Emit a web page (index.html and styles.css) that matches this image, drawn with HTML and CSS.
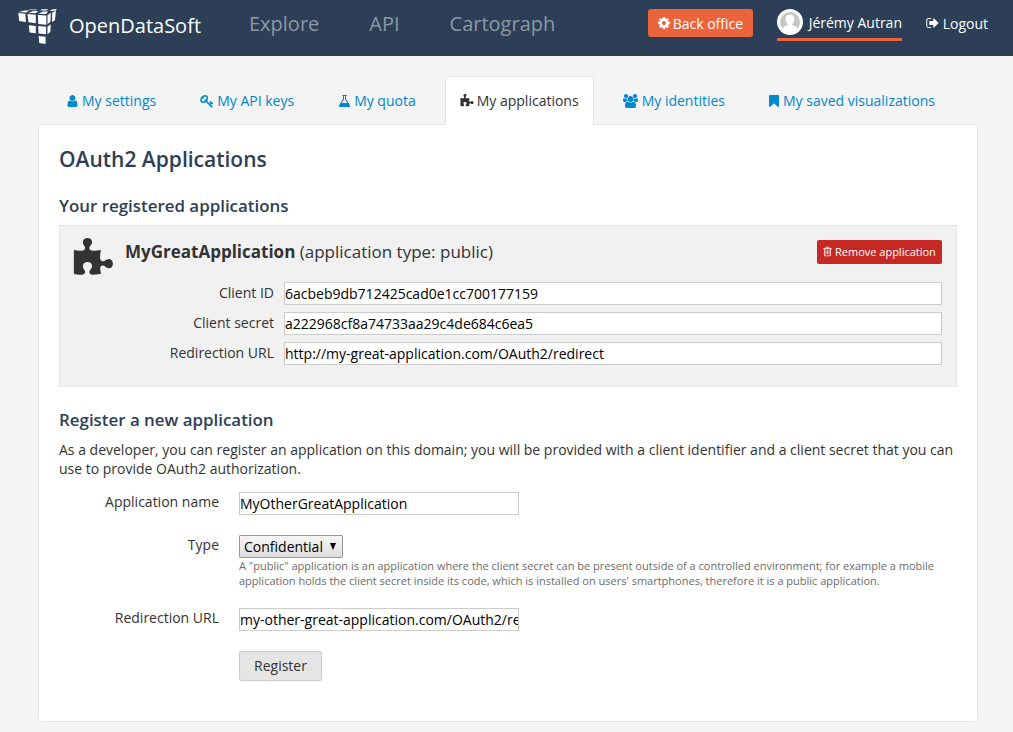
FILE: index.html
```html
<!DOCTYPE html>
<html lang="en">
<head>
<meta charset="utf-8">
<title>OAuth2 Applications</title>
<link rel="stylesheet" href="styles.css">
</head>
<body>
<svg class="defs" aria-hidden="true">
  <symbol id="cog" viewBox="128 0 1536 1792"><path d="M1152 896q0-106-75-181t-181-75-181 75-75 181 75 181 181 75 181-75 75-181zm512-109v222q0 12-8 23t-20 13l-185 28q-19 54-39 91 35 50 107 138 10 12 10 25t-9 23q-27 37-99 108t-94 71q-12 0-26-9l-138-108q-44 23-91 38-16 136-29 186-7 28-36 28h-222q-14 0-24.5-8.5t-11.5-21.5l-28-184q-49-16-90-37l-141 107q-10 9-25 9-14 0-25-11-126-114-165-168-7-10-7-23 0-12 8-23 15-21 51-66.5t54-70.5q-27-50-41-99l-183-27q-13-2-21-12.5t-8-23.5v-222q0-12 8-23t19-13l186-28q14-46 39-92-40-57-107-138-10-12-10-24 0-10 9-23 26-36 98.5-107.5t94.5-71.5q13 0 26 10l138 107q44-23 91-38 16-136 29-186 7-28 36-28h222q14 0 24.5 8.5t11.5 21.5l28 184q49 16 90 37l142-107q9-9 24-9 13 0 25 10 129 119 165 170 7 8 7 22 0 12-8 23-15 21-51 66.5t-54 70.5q26 50 41 98l183 28q13 2 21 12.5t8 23.5z"/></symbol>
  <symbol id="signout" viewBox="64 0 1600 1792"><path d="M704 1440q0 4 1 20t.5 26.5-3 23.5-10 19.5-20.5 6.5h-320q-119 0-203.5-84.5t-84.5-203.5v-704q0-119 84.5-203.5t203.5-84.5h320q13 0 22.5 9.5t9.5 22.5q0 4 1 20t.5 26.5-3 23.5-10 19.5-20.5 6.5h-320q-66 0-113 47t-47 113v704q0 66 47 113t113 47h312l11.5 1 11.5 3 8 5.5 7 9 2 13.5zm928-544q0 26-19 45l-544 544q-19 19-45 19t-45-19-19-45v-288h-448q-26 0-45-19t-19-45v-384q0-26 19-45t45-19h448v-288q0-26 19-45t45-19 45 19l544 544q19 19 19 45z"/></symbol>
  <symbol id="user" viewBox="256 0 1280 1792"><path d="M1536 1399q0 109-62.5 187t-150.5 78h-854q-88 0-150.5-78t-62.5-187q0-85 8.5-160.5t31.5-152 58.5-131 94-89 134.5-34.5q131 128 313 128t313-128q76 0 134.5 34.5t94 89 58.5 131 31.5 152 8.5 160.5zm-256-887q0 159-112.5 271.5t-271.5 112.5-271.5-112.5-112.5-271.5 112.5-271.5 271.5-112.5 271.5 112.5 112.5 271.5z"/></symbol>
  <symbol id="key" viewBox="40 0 1680 1792"><path d="M832 512q0-80-56-136t-136-56-136 56-56 136q0 42 19 83-41-19-83-19-80 0-136 56t-56 136 56 136 136 56 136-56 56-136q0-42-19-83 41 19 83 19 80 0 136-56t56-136zm851 704q0 17-49 66t-66 49q-9 0-28.5-16t-36.5-33-38.5-40-24.5-26l-96 96 220 220q28 28 28 68 0 42-39 81t-81 39q-40 0-68-28l-671-671q-176 131-365 131-163 0-265.5-102.5t-102.5-265.5q0-160 95-313t248-248 313-95q163 0 265.5 102.5t102.5 265.5q0 189-131 365l355 355 96-96q-3-3-26-24.5t-40-38.5-33-36.5-16-28.5q0-17 49-66t66-49q13 0 23 10 6 6 46 44.5t82 79.5 86.5 86 73 78 28.5 41z"/></symbol>
  <symbol id="flask" viewBox="64 0 1664 1792"><path d="M1591 1448q56 89 21.5 152.5t-140.5 63.5h-1152q-106 0-140.5-63.5t21.5-152.5l503-793v-399h-64q-26 0-45-19t-19-45 19-45 45-19h512q26 0 45 19t19 45-19 45-45 19h-64v399zm-779-725l-272 429h712l-272-429-20-31v-436h-128v436z"/></symbol>
  <symbol id="puzzle" viewBox="64 0 1728 1792"><path d="M1755 1099q0 81-44.5 135t-123.5 54q-41 0-77.5-17.5t-59-38-56.5-38-71-17.5q-110 0-110 124 0 39 16 115t15 115v5q-22 0-33 1-34 3-97.5 11.5t-115.5 13.5-98 5q-61 0-103-26.5t-42-83.5q0-37 17.5-71t38-56.5 38-59 17.5-77.5q0-79-54-123.5t-135-44.5q-84 0-143 45.5t-59 127.5q0 43 15 83t33.5 64.5 33.5 53 15 50.5q0 45-46 89-37 35-117 35-95 0-245-24-9-2-27.5-4t-27.5-4l-13-2q-1 0-3-1-2 0-2-1v-1024q2 1 17.5 3.5t34 5 21.5 3.5q150 24 245 24 80 0 117-35 46-44 46-89 0-22-15-50.5t-33.5-53-33.5-64.5-15-83q0-82 59-127.5t144-45.5q80 0 134 44.5t54 123.5q0 41-17.5 77.5t-38 59-38 56.5-17.5 71q0 57 42 83.5t103 26.5q64 0 180-15t163-17v2q-1 2-3.500 17.5t-5 34-3.500 21.5q-24 150-24 245 0 80 35 117 44 46 89 46 22 0 50.5-15t53-33.500 64.5-33.500 83-15q82 0 127.500 59t45.500 143z"/></symbol>
  <symbol id="users" viewBox="64 0 1920 1792"><path d="M657 896q-162 5-265 128h-134q-82 0-138-40.5t-56-118.5q0-353 124-353 6 0 43.5 21t97.5 42.5 119 21.5q67 0 133-23-5 37-5 66 0 139 81 256zm1071 637q0 120-73 189.5t-194 69.5h-874q-121 0-194-69.5t-73-189.5q0-53 3.5-103.5t14-109 26.5-108.5 43-97.5 62-81 85.5-53.5 111.5-20q10 0 43 21.5t73 48 107 48 135 21.5 135-21.5 107-48 73-48 43-21.5q61 0 111.5 20t85.5 53.5 62 81 43 97.5 26.5 108.5 14 109 3.5 103.5zm-1024-1277q0 106-75 181t-181 75-181-75-75-181 75-181 181-75 181 75 75 181zm704 384q0 159-112.5 271.5t-271.5 112.5-271.5-112.5-112.5-271.5 112.5-271.5 271.5-112.5 271.5 112.5 112.5 271.5zm576 225q0 78-56 118.5t-138 40.5h-134q-103-123-265-128 81-117 81-256 0-29-5-66 66 23 133 23 59 0 119-21.5t97.5-42.5 43.5-21q124 0 124 353zm-128-609q0 106-75 181t-181 75-181-75-75-181 75-181 181-75 181 75 75 181z"/></symbol>
  <symbol id="bookmark" viewBox="256 0 1280 1792"><path d="M1420 128q23 0 44 9 33 13 52.5 41t19.5 62v1289q0 34-19.5 62t-52.5 41q-19 8-44 8-48 0-83-32l-441-424-441 424q-36 33-83 33-23 0-44-9-33-13-52.5-41t-19.5-62v-1289q0-34 19.5-62t52.5-41q21-9 44-9h1048z"/></symbol>
  <symbol id="trash" viewBox="192 0 1408 1792"><path d="M704 736v576q0 14-9 23t-23 9h-64q-14 0-23-9t-9-23v-576q0-14 9-23t23-9h64q14 0 23 9t9 23zm256 0v576q0 14-9 23t-23 9h-64q-14 0-23-9t-9-23v-576q0-14 9-23t23-9h64q14 0 23 9t9 23zm256 0v576q0 14-9 23t-23 9h-64q-14 0-23-9t-9-23v-576q0-14 9-23t23-9h64q14 0 23 9t9 23zm128 724v-948h-896v948q0 22 7 40.5t14.5 27 10.5 8.5h832q3 0 10.5-8.5t14.5-27 7-40.5zm-672-1076h448l-48-117q-7-9-17-11h-317q-10 2-17 11zm928 32v64q0 14-9 23t-23 9h-96v948q0 83-47 143.5t-113 60.5h-832q-66 0-113-58.5t-47-141.5v-952h-96q-14 0-23-9t-9-23v-64q0-14 9-23t23-9h309l70-167q15-37 54-63t79-26h320q40 0 79 26t54 63l70 167h309q14 0 23 9t9 23z"/></symbol>
</svg>

<header class="topbar">
  <a class="brand">
    <svg class="logo" viewBox="0 0 40 36" aria-hidden="true">
      <path d="M.8 3l6-1.500h4.500L8 3.400zM10.300 3.800l5-1.900h5.200l-3 2.300zM20 4.700l5.300-2.300h5L28 5zM10 1.100l2.500-.7h7l-2 .9zM21.500 1.400l3-1.200h6l-2.200 1.400zM31.500 1.900l2.500-1.500 5-.3-1.500 1.600z"/>
      <path d="M.2 4l7.200.8.5 8.200-6.700-1zM9.500 5l8.300.7v8.500l-7.400-.9zM19.800 6l8.500.4v9.400l-8-.8zM29.500 6.300l3.400-2.500-.5 9-2.900 2.400zM34.200 3.600l3.700-1.800-.9 9.400-3 1.800z"/>
      <path d="M10.800 16.200l7 .8v7.200l-6.200-.8zM20.100 17l8 .7v7.500l-7.500-.7zM29.500 17.400l3.300-2-.5 7.600-2.800 2.300zM20.700 27l6.900.7v7.200l-6.400-.9z"/>
    </svg>
    <span class="brand-name">OpenDataSoft</span>
  </a>
  <nav class="mainnav"><a>Explore</a><a>API</a><a>Cartograph</a></nav>
  <div class="account">
    <a class="backoffice"><svg class="icon w-cog"><use href="#cog"/></svg>Back office</a>
    <a class="profile">
      <svg class="avatar" viewBox="0 0 26 26" aria-hidden="true"><circle cx="13" cy="13" r="13" fill="#fff"/><circle cx="13" cy="13" r="10" fill="#c5c5c5"/><path d="M13 5.500c-3 0-4.600 2-4.400 4.800.2 2 .9 3.500 2 4.500v1.300c-2.300.9-4.600 1.700-5.200 3.300A10 10 0 0 0 13 23a10 10 0 0 0 7.600-3.600c-.6-1.600-2.900-2.400-5.200-3.300v-1.300c1.100-1 1.800-2.500 2-4.500.2-2.800-1.400-4.800-4.400-4.800z" fill="#fff"/></svg>
      <span>Jérémy Autran</span>
    </a>
    <a class="logout"><svg class="icon w-out"><use href="#signout"/></svg>Logout</a>
  </div>
</header>

<main class="page">
  <nav class="tabs">
    <a class="tab"><svg class="icon w-user"><use href="#user"/></svg>My settings</a>
    <a class="tab"><svg class="icon w-key"><use href="#key"/></svg>My API keys</a>
    <a class="tab"><svg class="icon w-flask"><use href="#flask"/></svg>My quota</a>
    <a class="tab active"><svg class="icon w-puzzle"><use href="#puzzle"/></svg>My applications</a>
    <a class="tab"><svg class="icon w-users"><use href="#users"/></svg>My identities</a>
    <a class="tab"><svg class="icon w-bookmark"><use href="#bookmark"/></svg>My saved visualizations</a>
  </nav>

  <section class="panel">
    <h1>OAuth2 Applications</h1>
    <h2>Your registered applications</h2>
    <article class="app">
      <svg class="app-icon"><use href="#puzzle"/></svg>
      <div class="app-body">
        <div class="app-head">
          <h3><strong>MyGreatApplication</strong> (application type: public)</h3>
          <button class="remove"><svg class="icon w-trash"><use href="#trash"/></svg>Remove application</button>
        </div>
        <div class="app-row"><label>Client ID</label><input value="6acbeb9db712425cad0e1cc700177159"></div>
        <div class="app-row"><label>Client secret</label><input value="a222968cf8a74733aa29c4de684c6ea5"></div>
        <div class="app-row"><label>Redirection URL</label><input value="http://my-great-application.com/OAuth2/redirect"></div>
      </div>
    </article>

    <h2 class="new-title">Register a new application</h2>
    <p class="intro">As a developer, you can register an application on this domain; you will be provided with a client identifier and a client secret that you can use to provide OAuth2 authorization.</p>
    <form class="form">
      <label>Application name</label>
      <div class="field name"><input value="MyOtherGreatApplication"></div>
      <label>Type</label>
      <div class="field type">
        <div class="select"><span>Confidential</span><svg class="arrow" viewBox="0 0 6 7"><path d="M0 0h6L3 7z"/></svg></div>
        <p class="help">A "public" application is an application where the client secret can be present outside of a controlled environment; for example a mobile application holds the client secret inside its code, which is installed on users' smartphones, therefore it is a public application.</p>
      </div>
      <label>Redirection URL</label>
      <div class="field url"><input value="my-other-great-application.com/OAuth2/redirect"></div>
      <button class="register" type="button">Register</button>
    </form>
  </section>
</main>
</body>
</html>
```
FILE: styles.css
```css
* { box-sizing: border-box; }
body {
  margin: 0;
  height: 732px;
  overflow: hidden;
  background: #f4f4f4;
  color: #333;
  font: 14px/19px "Open Sans", sans-serif;
}
h1, h2, h3, p { margin: 0; }
input, button { font: inherit; }
.defs { display: none; }
.icon { display: inline-block; height: 14px; fill: currentColor; flex: none; margin-right: 4px; }
.w-cog { width: 12px; margin-right: 3px; }
.w-out { width: 13px; }
.w-user { width: 11px; }
.w-key { width: 14px; margin-right: 3px; }
.w-flask { width: 13px; margin-right: 3px; }
.w-puzzle { width: 14px; margin-right: 3px; }
.w-users { width: 15px; }
.w-bookmark { width: 10px; }
.w-trash { width: 9px; height: 11px; margin-right: 3px; }

.topbar { display: flex; height: 56px; background: #2c3f56; color: #fff; padding: 0 25px 0 18px; }
.brand { display: flex; width: 231px; }
.logo { width: 40px; height: 36px; margin-top: 9px; fill: #fff; }
.brand-name { margin: 11px 0 0 11px; font-size: 20px; line-height: 29px; }
.mainnav { display: flex; gap: 50px; font-size: 20px; line-height: 28px; padding-top: 10px; color: #8c98a6; }
.account { display: flex; margin-left: auto; align-items: flex-start; white-space: nowrap; }
.backoffice, .logout { display: flex; align-items: center; height: 28px; margin-top: 9px; }
.backoffice { padding: 0 10px; width: 105px; background: #ec643c; border-radius: 3px; }
.profile { display: flex; align-items: center; gap: 6px; width: 125px; height: 32px; margin: 9px 24px 0 24px; padding-bottom: 3px; border-bottom: 3px solid #ec643c; }
.avatar { width: 26px; height: 26px; flex: none; }

.page { width: 940px; margin: 20px 0 0 38px; }
.tabs { display: flex; height: 49px; padding-left: 14px; position: relative; }
.tab { display: flex; align-items: center; height: 49px; padding: 0 14px; border: 1px solid transparent; margin-right: 14px; color: #0088cc; white-space: nowrap; }
.tab.active { background: #fff; color: #333; border-color: #e5e5e5; border-bottom: 0; padding-bottom: 1px; border-radius: 3px 3px 0 0; }

.panel { height: 598px; margin-top: -1px; padding: 20px; background: #fff; border: 1px solid #e5e5e5; border-radius: 3px; }
h1 { color: #2c3f56; font-size: 21px; line-height: 28px; font-weight: 600; }
h2 { color: #2c3f56; font-size: 16.9px; line-height: 24px; font-weight: 600; margin-top: 21px; }
.app { display: flex; height: 162px; margin-top: 7px; padding: 14px 14px 14px 13px; background: #f1f1f1; border: 1px solid #e5e5e5; }
.app-icon { width: 41px; height: 42px; fill: #333; flex: none; margin-top: -2px; }
.app-body { flex: 1; margin-left: 11px; }
.app-head { display: flex; justify-content: space-between; height: 42px; }
h3 { font-size: 17px; line-height: 24px; font-weight: 400; }
.remove { display: flex; align-items: center; width: 125px; height: 24px; padding: 0 6px 1px; border: 0; border-radius: 2px; background: #c62923; color: #fff; font-size: 11px; white-space: nowrap; }
.app-row { display: flex; height: 30px; }
.app-row label { width: 149px; margin-right: 10px; padding-top: 1px; text-align: right; }
input { height: 23px; padding: 1px 0; border: 1px solid #ccc; background: #fff; color: #000; border-radius: 0; outline: 0; }
.app-row input { flex: 1; }

.new-title { margin-top: 21px; }
.intro { margin-top: 8px; }
.form { display: grid; grid-template-columns: 160px 1fr; column-gap: 20px; margin-top: 14px; }
.form label { text-align: right; }
.field input { width: 280px; display: block; }
.name { height: 43px; }
.type { height: 73px; }
.select { display: flex; align-items: center; justify-content: space-between; width: 104px; height: 23px; padding: 0 6px 0 4px; border: 1px solid #999; border-radius: 1px; background: linear-gradient(#f6f6f6, #dedede); color: #000; }
.arrow { width: 6px; height: 7px; }
.help { color: #6c6c6c; font-size: 11px; line-height: 15px; }
.url { height: 43px; }
.register { grid-column: 2; width: 83px; height: 30px; padding: 0 0 2px; border: 1px solid #ccc; border-radius: 2px; background: #e5e5e5; color: #333; }
```
